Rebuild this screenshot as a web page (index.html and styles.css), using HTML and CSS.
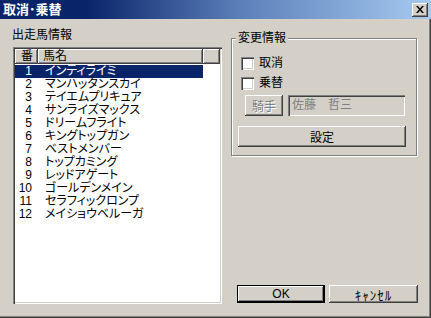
FILE: index.html
```html
<!DOCTYPE html>
<html lang="ja">
<head>
<meta charset="utf-8">
<title>取消･乗替</title>
<link rel="stylesheet" href="styles.css">
</head>
<body>
<div class="window">
  <div class="titlebar">
    <span class="title">取消･乗替</span>
    <button class="close" aria-label="閉じる"><svg width="8" height="7" viewBox="0 0 8 7"><path d="M0 0h2l2 2.4L6 0h2L5 3.5 8 7H6L4 4.6 2 7H0l3-3.5z" fill="#000"/></svg></button>
  </div>
  <div class="content">
    <div class="left">
      <div class="label">出走馬情報</div>
      <div class="listbox">
        <div class="header">
          <div class="hcell hnum">番</div>
          <div class="hcell hname">馬名</div>
          <div class="hcell hfill"></div>
        </div>
        <div class="rows">
          <div class="row selected"><span class="num">1</span><span class="name">インティライミ</span></div>
          <div class="row"><span class="num">2</span><span class="name">マンハッタンスカイ</span></div>
          <div class="row"><span class="num">3</span><span class="name">テイエムプリキュア</span></div>
          <div class="row"><span class="num">4</span><span class="name">サンライズマックス</span></div>
          <div class="row"><span class="num">5</span><span class="name">ドリームフライト</span></div>
          <div class="row"><span class="num">6</span><span class="name">キングトップガン</span></div>
          <div class="row"><span class="num">7</span><span class="name">ベストメンバー</span></div>
          <div class="row"><span class="num">8</span><span class="name">トップカミング</span></div>
          <div class="row"><span class="num">9</span><span class="name">レッドアゲート</span></div>
          <div class="row"><span class="num">10</span><span class="name">ゴールデンメイン</span></div>
          <div class="row"><span class="num">11</span><span class="name">セラフィックロンプ</span></div>
          <div class="row"><span class="num">12</span><span class="name">メイショウベルーガ</span></div>
        </div>
      </div>
    </div>
    <div class="right">
      <fieldset class="group">
        <legend>変更情報</legend>
        <label class="check"><span class="box"></span><span>取消</span></label>
        <label class="check second"><span class="box"></span><span>乗替</span></label>
        <div class="jockey">
          <button class="btn disabled jbtn">騎手</button>
          <div class="field">佐藤　哲三</div>
        </div>
        <button class="btn setbtn">設定</button>
      </fieldset>
      <div class="actions">
        <button class="btn default okbtn">OK</button>
        <button class="btn cancelbtn">ｷｬﾝｾﾙ</button>
      </div>
    </div>
  </div>
</div>
</body>
</html>
```

FILE: styles.css
```css
* { box-sizing: border-box; }
html, body { margin: 0; padding: 0; }
body {
  width: 431px;
  height: 318px;
  overflow: hidden;
  background: #d4d0c8;
  font-family: "Liberation Sans", "Noto Sans CJK JP", sans-serif;
  font-size: 12px;
  color: #000;
}
.window {
  width: 431px;
  height: 318px;
  display: flex;
  flex-direction: column;
  background: #d4d0c8;
  box-shadow: inset -1px -1px #404040, inset -2px -2px #808080;
}
.titlebar {
  height: 19px;
  flex: none;
  display: flex;
  align-items: center;
  justify-content: space-between;
  padding: 0 3px 0 3px;
  background: linear-gradient(to right, #0a246a 0%, #0a246a 20%, #5a7eb8 55%, #a6caf0 100%);
}
.title {
  color: #fff;
  font-weight: bold;
  font-size: 13px;
  line-height: 15px;
}
.close {
  width: 16px;
  height: 14px;
  padding: 0;
  border: 0;
  display: flex;
  align-items: center;
  justify-content: center;
  background: #d4d0c8;
  box-shadow: inset -1px -1px #404040, inset 1px 1px #fff, inset -2px -2px #808080;
}
.content {
  flex: 1;
  display: flex;
  padding: 0 0 0 13px;
  gap: 9px;
}
.left {
  width: 209px;
  display: flex;
  flex-direction: column;
  padding-bottom: 14px;
}
.label {
  margin-top: 9px;
  height: 14px;
  line-height: 14px;
  margin-left: -1px;
}
.listbox {
  margin-top: 5px;
  flex: 1;
  background: #fff;
  padding: 2px;
  box-shadow: inset 1px 1px #808080, inset 2px 2px #404040, inset -1px -1px #fff, inset -2px -2px #d4d0c8;
  display: flex;
  flex-direction: column;
}
.header {
  display: flex;
  height: 15px;
  flex: none;
}
.hcell {
  background: #d4d0c8;
  box-shadow: inset -1px -1px #404040, inset 1px 1px #fff, inset -2px -2px #808080;
  line-height: 15px;
  padding-left: 6px;
}
.hnum { width: 23px; }
.hname { width: 165px; padding-left: 5px; }
.hfill { flex: 1; }
.rows {
  padding-top: 1px;
}
.row {
  display: flex;
  width: 188px;
  height: 13px;
  line-height: 13px;
}
.row.selected {
  background: #0a246a;
  color: #fff;
}
.num {
  width: 23px;
  text-align: right;
  padding-right: 6px;
}
.name {
  padding-left: 7px;
  font-feature-settings: "palt";
  white-space: nowrap;
}
.right {
  width: 187px;
  display: flex;
  flex-direction: column;
  padding-bottom: 15px;
}
.group {
  margin: 12px 0 0 0;
  min-width: 0;
  width: 186px;
  padding: 12px 0 8px 6px;
  border: 1px solid #808080;
  box-shadow: inset 1px 1px #fff, 1px 1px #fff;
  display: flex;
  flex-direction: column;
  align-items: flex-start;
}
legend {
  padding: 0 2px;
  margin-left: -2px;
  line-height: 14px;
  background: #d4d0c8;
}
.check {
  display: flex;
  align-items: center;
  gap: 5px;
  height: 13px;
  margin-left: 3px;
  line-height: 13px;
}
.check.second { margin-top: 7px; }
.box {
  width: 13px;
  height: 13px;
  background: #fff;
  box-shadow: inset 1px 1px #808080, inset 2px 2px #404040, inset -1px -1px #fff, inset -2px -2px #d4d0c8;
}
.jockey {
  display: flex;
  gap: 5px;
  margin-top: 5px;
  margin-left: 7px;
  height: 21px;
}
.btn {
  font-family: inherit;
  font-size: 12px;
  color: #000;
  background: #d4d0c8;
  border: 0;
  padding: 0;
  box-shadow: inset -1px -1px #404040, inset 1px 1px #fff, inset -2px -2px #808080;
}
.btn.disabled {
  color: #808080;
  text-shadow: 1px 1px #fff;
}
.jbtn { width: 38px; height: 21px; }
.field {
  width: 117px;
  height: 21px;
  line-height: 21px;
  padding-left: 4px;
  color: #808080;
  background: #d4d0c8;
  box-shadow: inset 1px 1px #808080, inset 2px 2px #404040, inset -1px -1px #fff, inset -2px -2px #d4d0c8;
}
.setbtn {
  margin-top: 10px;
  width: 168px;
  height: 21px;
}
.actions {
  margin-top: auto;
  display: flex;
  gap: 4px;
  padding-left: 6px;
}
.okbtn, .cancelbtn {
  height: 18px;
}
.okbtn { width: 88px; }
.cancelbtn {
  width: 89px;
  font-size: 13px;
  letter-spacing: 1px;
}
.btn.default {
  box-shadow: inset 1px 1px #000, inset -2px -2px #000, inset 2px 2px #fff, inset -3px -3px #808080;
}
```
